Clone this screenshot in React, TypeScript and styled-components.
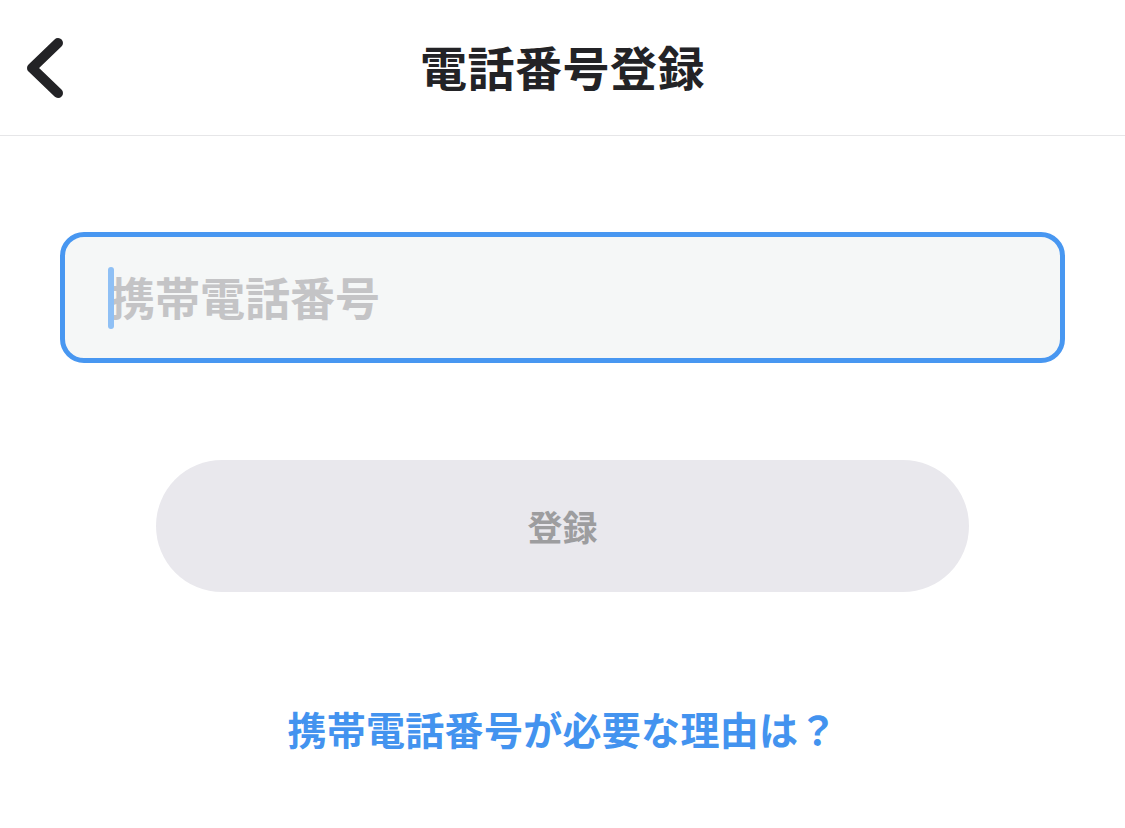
import styled, { createGlobalStyle } from "styled-components";

const GlobalStyle = createGlobalStyle`
  html, body {
    margin: 0;
    padding: 0;
    background: #ffffff;
  }
  body {
    font-family: "Noto Sans CJK JP", "Noto Sans", sans-serif;
  }
`;

/* ─── Styled Components ─── */

const Page = styled.div`
  width: 1125px;
  height: 828px;
  display: flex;
  flex-direction: column;
  background: #ffffff;
`;

const Header = styled.header`
  height: 136px;
  box-sizing: border-box;
  border-bottom: 1px solid #e6e6e8;
  display: grid;
  grid-template-columns: 120px 1fr 120px;
  align-items: center;
`;

const BackButton = styled.button`
  background: none;
  border: none;
  padding: 0 0 0 22px;
  height: 100%;
  display: flex;
  align-items: center;
  color: #232326;
  cursor: pointer;
`;

const Title = styled.h1`
  margin: 0;
  text-align: center;
  font-size: 47px;
  font-weight: 700;
  color: #232326;
  letter-spacing: 0.5px;
  line-height: 1;
  padding-bottom: 4px;
`;

const Content = styled.main`
  display: flex;
  flex-direction: column;
  align-items: center;
  padding: 96px 60px 0;
`;

const InputBox = styled.label`
  width: 100%;
  height: 131px;
  box-sizing: border-box;
  border: 5px solid #4897f1;
  border-radius: 24px;
  background: #f5f7f7;
  display: flex;
  align-items: center;
  padding-left: 43px;
`;

const Caret = styled.span`
  flex: 0 0 6px;
  height: 62px;
  border-radius: 3px;
  background: #8fc0f5;
  margin-right: -4px;
  position: relative;
  z-index: 1;
`;

const Field = styled.input`
  flex: 1;
  min-width: 0;
  border: none;
  outline: none;
  background: transparent;
  font-family: "Noto Sans CJK JP", "Noto Sans", sans-serif;
  font-size: 45px;
  font-weight: 700;
  color: #232326;
  padding: 0 0 2px;
  caret-color: transparent;

  &::placeholder {
    color: #c4c4c6;
  }
`;

const SubmitButton = styled.button`
  margin-top: 97px;
  width: 813px;
  height: 132px;
  border: none;
  border-radius: 66px;
  background: #e9e8ed;
  color: #9d9d9f;
  font-family: "Noto Sans CJK JP", "Noto Sans", sans-serif;
  font-size: 35px;
  font-weight: 700;
  padding-bottom: 2px;
`;

const HelpLink = styled.a`
  margin-top: 108px;
  font-size: 39px;
  font-weight: 700;
  color: #4393ef;
  text-decoration: none;
  letter-spacing: 0.3px;
  cursor: pointer;
`;

/* ─── Component ─── */

export default function App() {
  return (
    <Page>
      <GlobalStyle />
      <Header>
        <BackButton aria-label="戻る">
          <svg width="46" height="66" viewBox="0 0 46 66" fill="none">
            <path
              d="M36 8 L10 33 L36 58"
              stroke="currentColor"
              strokeWidth="10"
              strokeLinecap="round"
              strokeLinejoin="round"
            />
          </svg>
        </BackButton>
        <Title>電話番号登録</Title>
        <div />
      </Header>

      <Content>
        <InputBox>
          <Caret />
          <Field type="tel" placeholder="携帯電話番号" />
        </InputBox>

        <SubmitButton disabled>登録</SubmitButton>

        <HelpLink>携帯電話番号が必要な理由は？</HelpLink>
      </Content>
    </Page>
  );
}
